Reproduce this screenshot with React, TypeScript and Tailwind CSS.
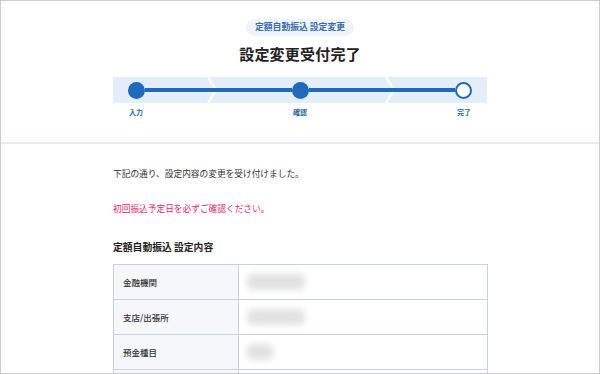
import { FC } from 'react';

const font = { fontFamily: '"Noto Sans CJK JP", "Noto Sans", sans-serif' };

const Chevron: FC<{ className: string }> = ({ className }) => (
  <svg
    className={`absolute top-0 ${className}`}
    width="12"
    height="26"
    viewBox="0 0 12 26"
    fill="none"
  >
    <polyline points="1,0 9,13 1,26" stroke="#ffffff" strokeWidth="2" />
  </svg>
);

const rows = [
  { label: '金融機関', blur: 'w-[58px]' },
  { label: '支店/出張所', blur: 'w-[58px]' },
  { label: '預金種目', blur: 'w-[26px]' },
  { label: '', blur: 'w-0' },
];

export default function App() {
  return (
    <div
      className="w-[600px] h-[374px] overflow-hidden bg-white border border-[#cccccc] text-[#222]"
      style={font}
    >
      <div className="flex flex-col items-center pt-[18px] pb-[26px]">
        <div className="h-[17px] px-[9px] flex items-center rounded-full bg-[#f0f3f8] text-[8.8px] font-semibold text-[#3b6ea8] leading-none">
          定額自動振込 設定変更
        </div>
        <h1 className="mt-[8px] text-[15px] font-bold leading-[19px] tracking-[0.2px]">
          設定変更受付完了
        </h1>

        <div className="relative mt-[14px] w-[374px] h-[26px] bg-[#e3eefa] flex items-center px-[15px]">
          <Chevron className="left-[94px]" />
          <Chevron className="left-[272px]" />
          <span className="relative w-[17px] h-[17px] rounded-full bg-[#1f6ab9]" />
          <span className="relative flex-1 h-[4px] bg-[#1f6ab9]" />
          <span className="relative w-[17px] h-[17px] rounded-full bg-[#1f6ab9]" />
          <span className="relative flex-1 h-[4px] bg-[#1f6ab9]" />
          <span className="relative w-[17px] h-[17px] rounded-full bg-white border-[2.5px] border-[#1f6ab9]" />
        </div>
        <div className="w-[374px] flex justify-between mt-[6px] text-[7px] font-bold text-[#2c66a6] leading-none">
          <span className="w-[46px] text-center">入力</span>
          <span className="w-[46px] text-center">確認</span>
          <span className="w-[46px] text-center">完了</span>
        </div>
      </div>

      <div className="h-[2px] bg-[#e6ebf1]" />

      <div className="pl-[112px] pt-[24px]">
        <p className="text-[8.7px] leading-[12px] text-[#333]">
          下記の通り、設定内容の変更を受け付けました。
        </p>
        <p className="mt-[23px] text-[8.7px] leading-[12px] text-[#e2246a]">
          初回振込予定日を必ずご確認ください。
        </p>
        <h2 className="mt-[25px] text-[9.8px] font-bold leading-[14px] text-[#222]">
          定額自動振込 設定内容
        </h2>

        <div className="mt-[10px] w-[375px] border-t border-l border-r border-[#c9d1dc]">
          {rows.map((r, i) => (
            <div key={i} className="flex h-[35px] border-b border-[#c9d1dc]">
              <div className="w-[125px] shrink-0 bg-[#f5f7fa] border-r border-[#c9d1dc] flex items-center pl-[9px] text-[8.5px] font-medium text-[#333]">
                {r.label}
              </div>
              <div className="flex-1 flex items-center pl-[8px]">
                <div className={`h-[16px] ${r.blur} rounded-[6px] bg-[#e2e2e2] blur-[3px]`} />
              </div>
            </div>
          ))}
        </div>
      </div>
    </div>
  );
}
